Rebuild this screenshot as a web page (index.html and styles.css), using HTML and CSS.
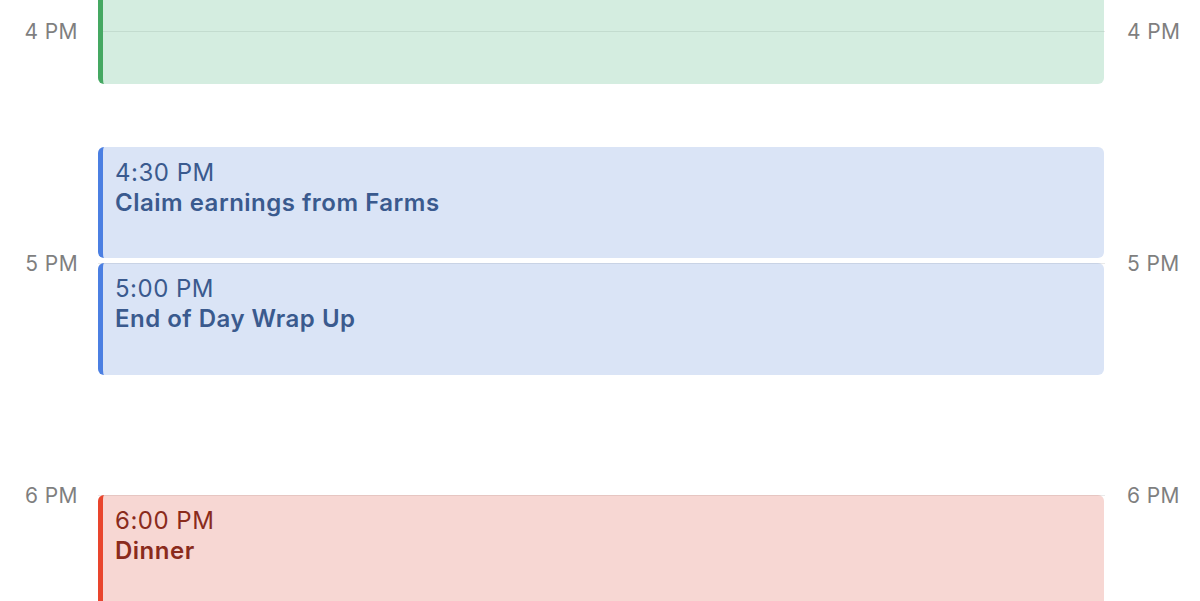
FILE: index.html
```html
<!DOCTYPE html>
<html lang="en">
<head>
<meta charset="utf-8">
<title>Day view</title>
<link rel="stylesheet" href="styles.css">
</head>
<body>
<div class="day">
  <div class="hour-line r4"></div>
  <div class="hour-line r5"></div>
  <div class="hour-line r6"></div>

  <div class="label left r4">4 PM</div>
  <div class="label right r4">4 PM</div>
  <div class="label left r5">5 PM</div>
  <div class="label right r5">5 PM</div>
  <div class="label left r6">6 PM</div>
  <div class="label right r6">6 PM</div>

  <div class="event green continued ev-a"></div>

  <div class="event blue ev-b">
    <div class="time">4:30 PM</div>
    <div class="title">Claim earnings from Farms</div>
  </div>

  <div class="event blue ev-c">
    <div class="time">5:00 PM</div>
    <div class="title">End of Day Wrap Up</div>
  </div>

  <div class="event red ev-d">
    <div class="time">6:00 PM</div>
    <div class="title">Dinner</div>
  </div>
</div>
</body>
</html>
```

FILE: styles.css
```css
html, body {
  margin: 0;
  padding: 0;
  background: #ffffff;
  overflow: hidden;
  height: 601px;
}

body {
  font-family: Inter, "Liberation Sans", sans-serif;
}

.day {
  display: grid;
  grid-template-columns: 98px 1fr 95px;
  grid-template-rows: 31px repeat(10, 58px);
  width: 1200px;
}

.hour-line {
  grid-column: 2;
  border-top: 1px solid #e9e9e9;
  height: 0;
  align-self: start;
}

.r4 { grid-row: 2; }
.r5 { grid-row: 6; }
.r6 { grid-row: 10; }

.label {
  align-self: start;
  transform: translateY(-50%);
  font-size: 21px;
  line-height: 24px;
  letter-spacing: 0.4px;
  color: #7f7f7f;
  margin-top: 1px;
}

.label.left {
  grid-column: 1;
  justify-self: end;
  padding-right: 20px;
}

.label.right {
  grid-column: 3;
  justify-self: start;
  padding-left: 22px;
}

.event {
  grid-column: 2;
  border-left: 5px solid;
  border-radius: 6px;
  padding: 11px 12px 0 12px;
  margin-bottom: 5px;
  margin-right: 1px;
  position: relative;
  font-size: 24px;
  line-height: 30px;
  letter-spacing: 0.5px;
  overflow: hidden;
}

.event.continued {
  border-top-left-radius: 0;
  border-top-right-radius: 0;
}

.ev-a { grid-row: 1 / 3; }
.ev-b { grid-row: 4 / 6; }
.ev-c { grid-row: 6 / 8; margin-bottom: 4px; }
.ev-d { grid-row: 10 / 12; margin-bottom: 0; }

.green {
  background: rgba(83, 183, 131, 0.25);
  border-left-color: #45a862;
}

.blue {
  background: rgba(107, 147, 219, 0.25);
  border-left-color: #4b7fe2;
  color: #3a5a8e;
}

.red {
  background: rgba(223, 95, 79, 0.25);
  border-left-color: #e9452d;
  color: #8a2b1c;
}

.time {
  font-weight: 400;
}

.title {
  font-weight: 600;
}
```
